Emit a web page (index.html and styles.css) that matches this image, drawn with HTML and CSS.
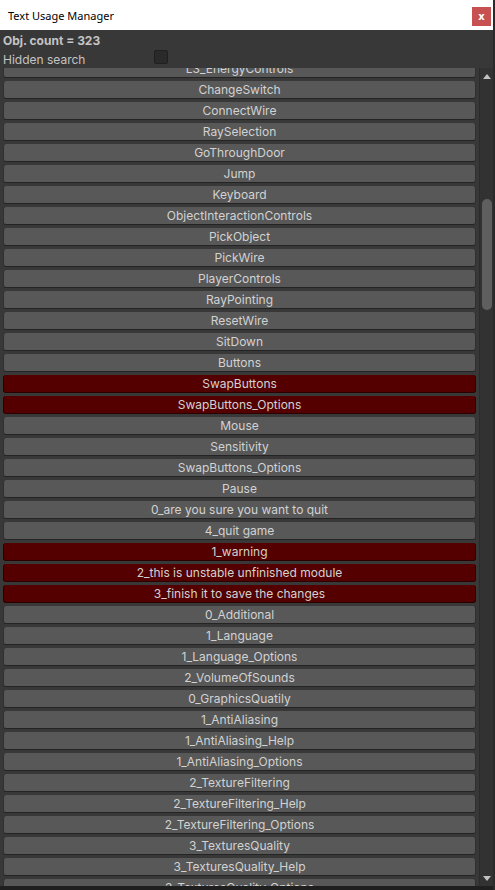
FILE: index.html
```html
<!DOCTYPE html>
<html lang="en">
<head>
    <meta charset="UTF-8">
    <meta name="viewport" content="width=device-width, initial-scale=1.0">
    <title>Text Usage Manager</title>
    <link rel="stylesheet" href="styles.css">
</head>
<body>
    <div class="ventana">
        <header class="titulo">
            <span>Text Usage Manager</span>
            <button class="cerrar">x</button>
        </header>
        <section class="cabecera">
            <div class="contador">Obj. count = 323</div>
            <div class="busqueda">
                <span>Hidden search</span>
                <span class="casilla"></span>
            </div>
        </section>
        <section class="cuerpo">
            <div class="lista">
                <div class="fila">L3_EnergyControls</div>
                <div class="fila">ChangeSwitch</div>
                <div class="fila">ConnectWire</div>
                <div class="fila">RaySelection</div>
                <div class="fila">GoThroughDoor</div>
                <div class="fila">Jump</div>
                <div class="fila">Keyboard</div>
                <div class="fila">ObjectInteractionControls</div>
                <div class="fila">PickObject</div>
                <div class="fila">PickWire</div>
                <div class="fila">PlayerControls</div>
                <div class="fila">RayPointing</div>
                <div class="fila">ResetWire</div>
                <div class="fila">SitDown</div>
                <div class="fila">Buttons</div>
                <div class="fila roja">SwapButtons</div>
                <div class="fila roja">SwapButtons_Options</div>
                <div class="fila">Mouse</div>
                <div class="fila">Sensitivity</div>
                <div class="fila">SwapButtons_Options</div>
                <div class="fila">Pause</div>
                <div class="fila">0_are you sure you want to quit</div>
                <div class="fila">4_quit game</div>
                <div class="fila roja">1_warning</div>
                <div class="fila roja">2_this is unstable unfinished module</div>
                <div class="fila roja">3_finish it to save the changes</div>
                <div class="fila">0_Additional</div>
                <div class="fila">1_Language</div>
                <div class="fila">1_Language_Options</div>
                <div class="fila">2_VolumeOfSounds</div>
                <div class="fila">0_GraphicsQuatily</div>
                <div class="fila">1_AntiAliasing</div>
                <div class="fila">1_AntiAliasing_Help</div>
                <div class="fila">1_AntiAliasing_Options</div>
                <div class="fila">2_TextureFiltering</div>
                <div class="fila">2_TextureFiltering_Help</div>
                <div class="fila">2_TextureFiltering_Options</div>
                <div class="fila">3_TexturesQuality</div>
                <div class="fila">3_TexturesQuality_Help</div>
                <div class="fila">3_TexturesQuality_Options</div>
            </div>
            <div class="barra">
                <span class="flecha arriba"></span>
                <div class="pista">
                    <div class="pulgar"></div>
                </div>
                <span class="flecha abajo"></span>
            </div>
        </section>
        <footer class="pie"></footer>
    </div>
</body>
</html>
```

FILE: styles.css
```css
body {
    margin: 0;
    background-color: #383838;
    font-family: Inter, "Noto Sans", sans-serif;
    font-size: 12px;
    width: 495px;
    height: 890px;
    overflow: hidden;
}

.ventana {
    display: flex;
    flex-direction: column;
    height: 890px;
    border-right: 2px solid #2a2a2a;
    box-sizing: border-box;
}

.titulo {
    height: 30px;
    background: #fff;
    display: flex;
    align-items: center;
    justify-content: space-between;
    padding: 0 2px 0 8px;
    color: #000;
    font-family: "Noto Sans", sans-serif;
    font-size: 11px;
    flex-shrink: 0;
}

.cerrar {
    width: 19px;
    height: 19px;
    margin-top: 2px;
    border: 0;
    padding: 0;
    background: #c75050;
    color: #fff;
    font-family: "DejaVu Sans", sans-serif;
    font-weight: bold;
    font-size: 10px;
    line-height: 17px;
}

.cabecera {
    height: 38px;
    padding: 0 3px;
    color: #c4c4c4;
    flex-shrink: 0;
}

.contador {
    font-weight: bold;
    height: 20px;
    line-height: 21px;
}

.busqueda {
    display: flex;
    align-items: center;
    height: 18px;
}

.busqueda span:first-child {
    width: 151px;
}

.casilla {
    width: 12px;
    height: 12px;
    background: #2a2a2a;
    border: 1px solid #202020;
    border-radius: 2px;
    margin-top: -4px;
}

.cuerpo {
    flex: 1;
    display: flex;
    overflow: hidden;
}

.lista {
    flex: 1;
    margin-top: -8px;
    padding: 0 3px;
}

.fila {
    height: 17px;
    line-height: 17px;
    margin-bottom: 3px;
    background: #585858;
    border: 1px solid #303030;
    border-bottom-color: #242424;
    border-width: 0 1px 1px 1px;
    border-radius: 3px;
    text-align: center;
    color: #d2d2d2;
    white-space: nowrap;
}

.fila.roja {
    background: #550000;
    border-color: #2a0000;
}

.barra {
    width: 13px;
    background: #323232;
    border-left: 1px solid #2b2b2b;
    display: flex;
    flex-direction: column;
    align-items: center;
}

.flecha {
    width: 0;
    height: 0;
    border-left: 4px solid transparent;
    border-right: 4px solid transparent;
    margin: 6px 0;
}

.arriba {
    border-bottom: 5px solid #c2c2c2;
}

.abajo {
    border-top: 5px solid #c2c2c2;
    margin-bottom: 5px;
}

.pista {
    flex: 1;
    width: 100%;
    display: flex;
    justify-content: center;
}

.pulgar {
    width: 10px;
    height: 111px;
    margin-top: 114px;
    background: #5f5f5f;
    border-radius: 5px;
}

.pie {
    height: 4px;
    background: #1f1f1f;
    flex-shrink: 0;
}
```
